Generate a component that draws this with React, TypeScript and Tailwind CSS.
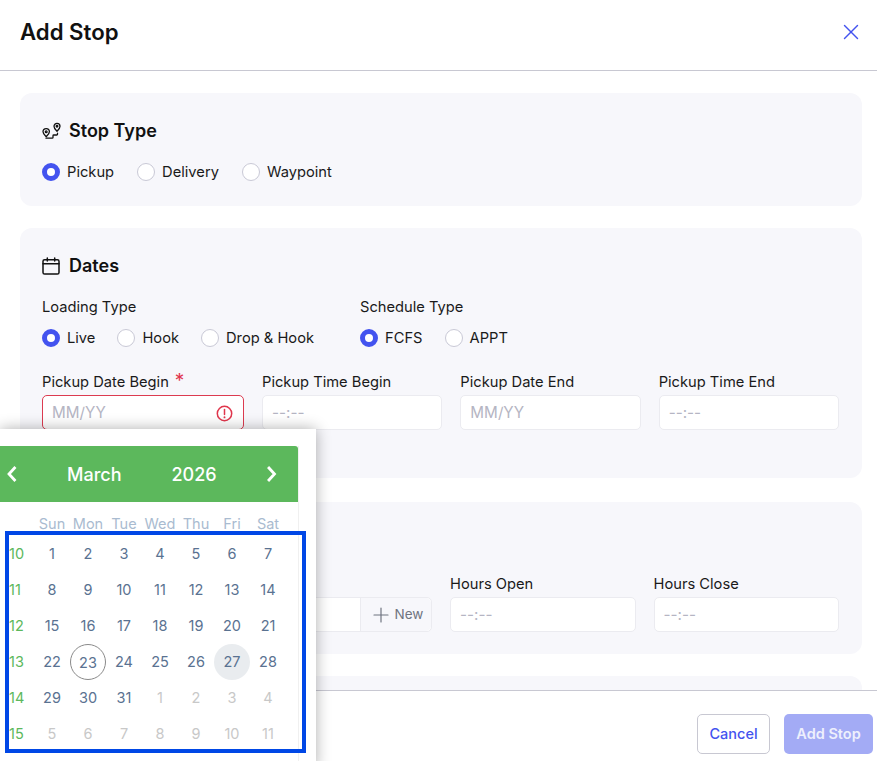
import { X, Plus } from "lucide-react";

const weeks = [
  { no: 10, days: [1, 2, 3, 4, 5, 6, 7] },
  { no: 11, days: [8, 9, 10, 11, 12, 13, 14] },
  { no: 12, days: [15, 16, 17, 18, 19, 20, 21] },
  { no: 13, days: [22, 23, 24, 25, 26, 27, 28] },
  { no: 14, days: [29, 30, 31, 1, 2, 3, 4] },
  { no: 15, days: [5, 6, 7, 8, 9, 10, 11] },
];

function Radio({ label, checked }: { label: string; checked?: boolean }) {
  return (
    <label className="flex items-center gap-[7px]">
      {checked ? (
        <span className="size-[18px] rounded-full border-[5px] border-[#4353ef] bg-white" />
      ) : (
        <span className="size-[18px] rounded-full border border-[#c9c9d6] bg-white" />
      )}
      <span className="text-[14.7px] leading-5 text-[#1a1a1a]">{label}</span>
    </label>
  );
}

function Field({ label, placeholder, className }: { label: string; placeholder: string; className?: string }) {
  return (
    <div className={className}>
      <div className="mb-[3px] text-[14.7px] leading-5 text-[#1a1a1a]">{label}</div>
      <div className="flex h-[35px] items-center rounded-[5px] border border-[#ebebf0] bg-white px-[9px] pt-[1px] text-[15.25px] text-[#b5b5c3]">
        {placeholder}
      </div>
    </div>
  );
}

function StopIcon() {
  return (
    <svg width="19" height="19" viewBox="0 0 19 19" fill="none" stroke="#111" strokeWidth="1.3" strokeLinecap="round" strokeLinejoin="round">
      <path d="M4.200 14.700C2.600 13.200 1 11.800 1 9.800a3.200 3.200 0 0 1 6.400 0c0 2-1.600 3.400-3.200 4.900z" />
      <circle cx="4.200" cy="9.800" r=".9" />
      <path d="M15 9.200c-1.400-1.400-3-2.700-3-4.900a3 3 0 0 1 6 0c0 2.200-1.600 3.500-3 4.900z" />
      <circle cx="15" cy="4.300" r=".8" />
      <path d="M15.500 11.200v1a.8.8 0 0 1-.8.8h-2.900a.8.8 0 0 0-.8.800v1.600a.8.8 0 0 1-.8.800H4" />
    </svg>
  );
}

function CalendarIcon() {
  return (
    <svg width="18" height="18" viewBox="0 0 18 18" fill="none" stroke="#111" strokeWidth="1.5" strokeLinecap="round" strokeLinejoin="round">
      <rect x="1" y="2.700" width="16" height="14.300" rx="1.600" />
      <path d="M1 6.800h16" />
      <path d="M5.300 1v3" />
      <path d="M12.700 1v3" />
    </svg>
  );
}

export default function App() {
  return (
    <div className="relative flex h-[761px] w-[877px] flex-col overflow-hidden bg-white font-['Inter',sans-serif]">
      <header className="flex h-[71px] shrink-0 items-center justify-between border-b border-[#c8c8d2] pb-[7px] pl-5 pr-[13px]">
        <h1 className="text-[22.2px] font-semibold text-[#111]">Add Stop</h1>
        <X size={26} strokeWidth={1.3} className="text-[#4353ef]" />
      </header>

      <main className="flex min-h-0 flex-1 flex-col gap-[22px] overflow-hidden pl-5 pr-[15px] pt-[22px]">
        <section className="h-[113px] shrink-0 rounded-xl bg-[#f7f7fb] pl-[22px] pr-[23px] pt-[26px]">
          <div className="flex h-6 items-center gap-2">
            <StopIcon />
            <h2 className="-mt-[2px] text-[18px] font-semibold text-[#111]">Stop Type</h2>
          </div>
          <div className="mt-[19px] flex gap-[23px]">
            <Radio label="Pickup" checked />
            <Radio label="Delivery" />
            <Radio label="Waypoint" />
          </div>
        </section>

        <section className="h-[250px] shrink-0 rounded-xl bg-[#f7f7fb] pl-[22px] pr-[23px] pt-[26px]">
          <div className="flex h-6 items-center gap-[9px]">
            <CalendarIcon />
            <h2 className="-mt-[2px] text-[18px] font-semibold text-[#111]">Dates</h2>
          </div>
          <div className="mt-[19px] flex">
            <div className="w-[318px]">
              <div className="text-[14.7px] leading-5 text-[#1a1a1a]">Loading Type</div>
              <div className="mt-[11px] flex gap-[22px]">
                <Radio label="Live" checked />
                <Radio label="Hook" />
                <Radio label="Drop & Hook" />
              </div>
            </div>
            <div>
              <div className="text-[14.7px] leading-5 text-[#1a1a1a]">Schedule Type</div>
              <div className="mt-[11px] flex gap-[22px]">
                <Radio label="FCFS" checked />
                <Radio label="APPT" />
              </div>
            </div>
          </div>
          <div className="mt-[24px] flex gap-[18px]">
            <div className="w-[202px] shrink-0">
              <div className="mb-[3px] flex h-5 text-[14.7px] leading-5 text-[#1a1a1a]">
                Pickup Date Begin
                <span className="ml-[6px] mt-[-1px] text-[19px] leading-5 text-[#e0364c]">*</span>
              </div>
              <div className="flex h-[35px] items-center justify-between rounded-[5px] border border-[#dc3b50] bg-white pl-[9px] pr-[10px] pt-[1px] text-[15.25px] text-[#b5b5c3]">
                MM/YY
                <svg width="17" height="17" viewBox="0 0 17 17" fill="none" stroke="#e0364c" strokeWidth="1.5" strokeLinecap="round">
                  <circle cx="8.500" cy="8.500" r="7.200" />
                  <path d="M8.500 4.600v5" />
                  <path d="M8.500 12.200v.2" strokeWidth="1.900" />
                </svg>
              </div>
            </div>
            <Field label="Pickup Time Begin" placeholder="--:--" className="flex-1" />
            <Field label="Pickup Date End" placeholder="MM/YY" className="flex-1" />
            <Field label="Pickup Time End" placeholder="--:--" className="flex-1" />
          </div>
        </section>

        <section className="mt-[2px] h-[152px] shrink-0 rounded-xl bg-[#f7f7fb] pl-[22px] pr-[23px] pt-[72px]">
          <div className="flex gap-[18px]">
            <div className="w-[390px] shrink-0 pt-[23px]">
              <div className="flex h-[35px] rounded-[5px] border border-[#ebebf0] bg-white">
                <div className="flex-1" />
                <div className="flex w-[71px] items-center justify-center gap-[2px] rounded-r-[5px] border-l border-[#ebebf0] bg-[#f7f7fb] text-[13.5px] text-[#6f7480]">
                  <Plus size={24} strokeWidth={1.2} />
                  New
                </div>
              </div>
            </div>
            <Field label="Hours Open" placeholder="--:--" className="flex-1" />
            <Field label="Hours Close" placeholder="--:--" className="flex-1" />
          </div>
        </section>

        <section className="h-[120px] shrink-0 rounded-xl bg-[#f7f7fb]" />
      </main>

      <footer className="flex h-[71px] shrink-0 items-start justify-end gap-[14px] border-t border-[#c8c8d2] bg-white pr-1 pt-[23px]">
        <button className="h-10 w-[73px] rounded-[5px] border border-[#c8c8d2] bg-white text-[14.5px] font-medium text-[#4353ef]">Cancel</button>
        <button className="h-10 w-[89px] rounded-[5px] bg-[#a3abf5] text-[14.5px] font-semibold text-[#eef0fd]">Add Stop</button>
      </footer>

      {/* date picker popover */}
      <div className="absolute left-0 top-[429px] h-[340px] w-[316px] bg-white pt-[17px] shadow-[0_0_14px_rgba(0,0,0,0.32)]">
        <div className="h-full w-[299px] border-r border-[#f0f0f0]">
          <div className="flex h-[56px] items-center rounded-tr-[3px] bg-[#5cb85c] text-[18px] font-medium text-white">
            <svg width="14" height="18" viewBox="0 0 14 18" fill="none" stroke="white" strokeWidth="2.800" strokeLinecap="square" className="ml-[4px]">
              <path d="M10.500 3 5 9l5.500 6" />
            </svg>
            <span className="ml-[49px]">March</span>
            <span className="ml-[50px]">2026</span>
            <svg width="14" height="18" viewBox="0 0 14 18" fill="none" stroke="white" strokeWidth="2.800" strokeLinecap="square" className="ml-[48px]">
              <path d="M4 3l5.500 6L4 15" />
            </svg>
          </div>
          <div className="grid grid-cols-[34px_repeat(7,36px)] pt-[12px] text-[14.5px]">
            <div />
            {["Sun", "Mon", "Tue", "Wed", "Thu", "Fri", "Sat"].map((d) => (
              <div key={d} className="h-5 text-center leading-5 text-[#a9bbd0]">{d}</div>
            ))}
          </div>
          <div className="mt-[2px] text-[14.5px]">
            {weeks.map((w, i) => (
              <div key={w.no} className="grid h-9 grid-cols-[34px_repeat(7,36px)] items-center">
                <div className="pl-[9px] text-[#5cb85c]">{w.no}</div>
                {w.days.map((d, j) => {
                  const muted = (i === 4 && j > 2) || i === 5;
                  const today = i === 3 && j === 1;
                  const picked = i === 3 && j === 5;
                  return (
                    <div
                      key={j}
                      className={
                        today
                          ? "flex size-9 items-center justify-center rounded-full border border-[#8a8a8a] pt-[1px] text-[#5a7291]"
                          : picked
                            ? "flex size-9 items-center justify-center rounded-full bg-[#e9ecef] text-[#5a7291]"
                            : muted
                              ? "text-center text-[#c8c8c8]"
                              : "text-center text-[#5a7291]"
                      }
                    >
                      {d}
                    </div>
                  );
                })}
              </div>
            ))}
          </div>
        </div>
      </div>

      {/* blue highlight over the day grid */}
      <div className="absolute left-[5px] top-[531px] h-[222px] w-[301px] border-4 border-[#0047e6]" />
    </div>
  );
}
